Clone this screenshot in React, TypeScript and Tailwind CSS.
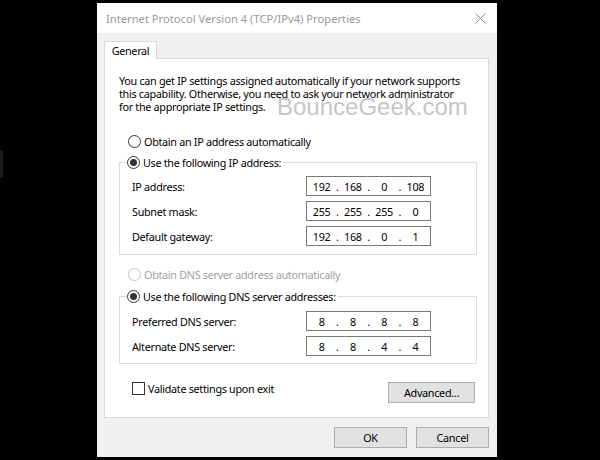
import React from 'react';

const font = { fontFamily: '"Noto Sans", "Liberation Sans", sans-serif' };

const Radio: React.FC<{ checked?: boolean; disabled?: boolean; label: string }> = ({ checked, disabled, label }) => (
  <div className="flex items-center h-[14px] whitespace-nowrap">
    <span
      className={`w-[13px] h-[13px] rounded-full border bg-white flex items-center justify-center ${disabled ? 'border-[#c4c4c4]' : 'border-[#333333]'}`}
    >
      {checked && <span className="w-[7px] h-[7px] rounded-full bg-[#333333]" />}
    </span>
    <span className={`ml-[3px] ${disabled ? 'text-[#a0a0a0]' : 'text-black'}`}>{label}</span>
  </div>
);

const IpBox: React.FC<{ parts: string[] }> = ({ parts }) => (
  <div className="w-[125px] h-[20px] border border-[#7a7a7a] bg-white flex items-center px-[1px]">
    {parts.map((p, i) => (
      <React.Fragment key={i}>
        <span className="flex-1 text-center">{p}</span>
        {i < 3 && <span className="w-[4px] text-center">.</span>}
      </React.Fragment>
    ))}
  </div>
);

const Row: React.FC<{ label: string; parts: string[] }> = ({ label, parts }) => (
  <div className="flex items-center h-[20px]">
    <span className="w-[186px] pl-[12px]">{label}</span>
    <IpBox parts={parts} />
  </div>
);

export default function App() {
  return (
    <div
      className="w-[600px] h-[460px] bg-black relative overflow-hidden text-[10.8px] tracking-[-0.3px] leading-[13px] text-black"
      style={font}
    >
      <div className="absolute left-0 top-[150px] w-[3px] h-[28px] bg-[#1c1c1c]" />
      <div className="ml-[97px] pt-[3px]">
        <div className="w-[400px] h-[454px] bg-[#f0f0f0] flex flex-col">
          {/* title bar */}
          <div className="h-[30px] bg-white flex items-center justify-between pl-[9px] pr-[10px]">
            <span className="text-[#999999] text-[11.2px] tracking-normal whitespace-nowrap">
              Internet Protocol Version 4 (TCP/IPv4) Properties
            </span>
            <svg width="11" height="11" viewBox="0 0 11 11" className="mr-[1px]">
              <path d="M0.5 0.5L10.5 10.5M10.5 0.5L0.5 10.5" stroke="#8a8a8a" strokeWidth="1" />
            </svg>
          </div>

          <div className="px-[7px] pt-[8px] flex flex-col">
            {/* tab */}
            <div className="flex">
              <div className="h-[18px] w-[53px] bg-white border border-b-0 border-[#d9d9d9] flex items-center justify-center -mb-[1px] relative z-10">
                General
              </div>
            </div>

            {/* panel */}
            <div className="relative w-[385px] h-[360px] bg-white border border-[#d9d9d9] flex flex-col pl-[14px] pt-[15px]">
              <p className="whitespace-nowrap">
                You can get IP settings assigned automatically if your network supports
                <br />
                this capability. Otherwise, you need to ask your network administrator
                <br />
                for the appropriate IP settings.
              </p>

              <span
                className="absolute left-[172px] top-[36px] text-[24px] leading-[24px] tracking-normal text-[#c6c6c6]"
                style={{ fontFamily: '"Liberation Sans", Arial, sans-serif' }}
              >
                BounceGeek.com
              </span>

              <div className="mt-[21px] ml-[9px]">
                <Radio label="Obtain an IP address automatically" />
              </div>

              <fieldset className="mt-[7px] w-[358px] border border-[#dcdcdc] pb-[8px]">
                <legend className="ml-[7px] pr-[2px] bg-white">
                  <Radio checked label="Use the following IP address:" />
                </legend>
                <div className="flex flex-col mt-[7px] gap-[5px]">
                  <Row label="IP address:" parts={['192', '168', '0', '108']} />
                  <Row label="Subnet mask:" parts={['255', '255', '255', '0']} />
                  <Row label="Default gateway:" parts={['192', '168', '0', '1']} />
                </div>
              </fieldset>

              <div className="mt-[12px] ml-[9px]">
                <Radio disabled label="Obtain DNS server address automatically" />
              </div>

              <fieldset className="mt-[8px] w-[358px] border border-[#dcdcdc] pb-[7px]">
                <legend className="ml-[7px] pr-[2px] bg-white">
                  <Radio checked label="Use the following DNS server addresses:" />
                </legend>
                <div className="flex flex-col mt-[8px] gap-[5px]">
                  <Row label="Preferred DNS server:" parts={['8', '8', '8', '8']} />
                  <Row label="Alternate DNS server:" parts={['8', '8', '4', '4']} />
                </div>
              </fieldset>

              <div className="mt-[17px] w-[356px] flex items-start justify-between">
                <div className="flex items-center ml-[13px] h-[14px]">
                  <span className="w-[13px] h-[13px] border border-[#333333] bg-white" />
                  <span className="ml-[3px]">Validate settings upon exit</span>
                </div>
                <button className="mt-[1px] w-[87px] h-[21px] bg-[#e1e1e1] border border-[#adadad] flex items-center justify-center">
                  Advanced...
                </button>
              </div>
            </div>

            {/* buttons */}
            <div className="mt-[9px] w-[385px] flex justify-end gap-[9px]">
              <button className="w-[73px] h-[21px] bg-[#e1e1e1] border border-[#adadad] flex items-center justify-center">OK</button>
              <button className="w-[73px] h-[21px] bg-[#e1e1e1] border border-[#adadad] flex items-center justify-center">Cancel</button>
            </div>
          </div>
        </div>
      </div>
    </div>
  );
}
